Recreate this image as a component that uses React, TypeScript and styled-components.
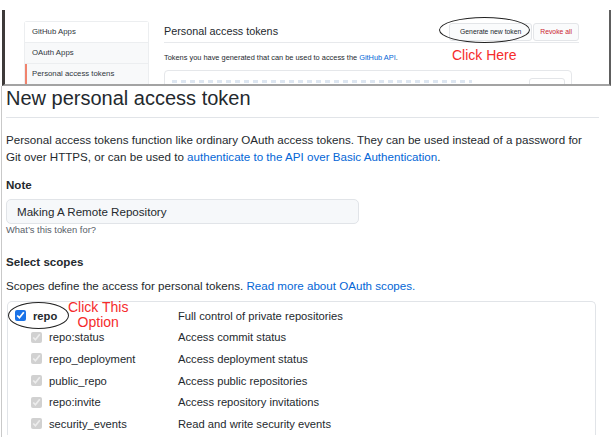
import React from "react"
import styled, { createGlobalStyle } from "styled-components"

const GlobalStyle = createGlobalStyle`
  html, body {
    margin: 0;
    padding: 0;
    background: #fff;
  }
  body {
    font-family: "Liberation Sans", Arial, sans-serif;
    color: #24292e;
  }
`

const Page = styled.div`
  width: 614px;
  height: 445px;
  overflow: hidden;
  background: #fff;
`

// ---------- cropped screenshot at the top ----------

const TopShot = styled.div`
  box-sizing: border-box;
  margin: 10px 3px 0 2px;
  height: 76px;
  border-left: 3px solid #3d3a39;
  border-right: 2px solid #5e5e5e;
  border-bottom: 2px solid #a3a3a3;
  display: flex;
  gap: 15px;
  padding: 11px 0 0 19px;
  overflow: hidden;
  position: relative;
`

const SideMenu = styled.div`
  width: 123px;
  flex-shrink: 0;
  border: 1px solid #eceef0;
  border-bottom: none;
  border-radius: 3px 3px 0 0;
  font-size: 7.8px;
  color: #2f363d;
`

const SideItem = styled.div<{ $active?: boolean; $tint?: boolean }>`
  height: 20px;
  line-height: 20px;
  padding-left: 7px;
  border-top: 1px solid #eceef0;
  background: ${(p) => (p.$tint ? "#f8f9fa" : "#fff")};
  box-shadow: ${(p) => (p.$active ? "inset 2px 0 0 #f0836d" : "none")};
  &:first-child {
    border-top: none;
  }
`

const TopMain = styled.div`
  width: 415px;
  flex-shrink: 0;
`

const TopHead = styled.div`
  display: flex;
  align-items: center;
  justify-content: space-between;
  height: 20px;
  padding-bottom: 1px;
  border-bottom: 1px solid #e7e9ec;
`

const TopTitle = styled.div`
  font-size: 10.8px;
  color: #24292e;
`

const TopButtons = styled.div`
  display: flex;
  gap: 1px;
  margin-top: 1px;
`

const SmallBtn = styled.div<{ $danger?: boolean }>`
  height: 16px;
  line-height: 16px;
  padding: 0 ${(p) => (p.$danger ? "6px" : "10px")};
  border: 1px solid #e3e5e8;
  border-radius: 3px;
  background: #fafbfc;
  font-size: 6.8px;
  font-weight: 500;
  color: ${(p) => (p.$danger ? "#cb2431" : "#24292e")};
`

const TopText = styled.div`
  font-size: 7.4px;
  color: #24292e;
  margin-top: 10px;
  a {
    color: #0366d6;
    text-decoration: none;
  }
`

const TokenBox = styled.div`
  margin-top: 8px;
  width: 406px;
  height: 24px;
  border: 1px solid #e5e7ea;
  border-radius: 4px;
  position: relative;
`

const BlurLine = styled.div`
  position: absolute;
  left: 7px;
  top: 9px;
  width: 300px;
  height: 3px;
  background: repeating-linear-gradient(90deg, #b4c8e2 0 5px, transparent 5px 9px);
  filter: blur(0.6px);
  opacity: 0.45;
`

const BlurButton = styled.div`
  position: absolute;
  right: 6px;
  top: 7px;
  width: 34px;
  height: 16px;
  border: 1px solid #e3e5e8;
  border-radius: 3px;
`

// ---------- annotations drawn over the shots ----------

const Ring = styled.div<{ $l: number; $t: number; $w: number; $h: number }>`
  position: absolute;
  left: ${(p) => p.$l}px;
  top: ${(p) => p.$t}px;
  width: ${(p) => p.$w}px;
  height: ${(p) => p.$h}px;
  box-sizing: border-box;
  border: 1.3px solid #222;
  border-radius: 50%;
  pointer-events: none;
`

const Note = styled.div<{ $l: number; $t: number }>`
  position: absolute;
  left: ${(p) => p.$l}px;
  top: ${(p) => p.$t}px;
  color: #f52b2b;
  font-family: "Liberation Sans", Arial, sans-serif;
  font-size: 14px;
  line-height: 15px;
  text-align: center;
  white-space: nowrap;
`

// ---------- main form screenshot ----------

const FormShot = styled.div`
  box-sizing: border-box;
  height: 351px;
  margin-left: 1px;
  border-left: 1px solid #c9c9c9;
  padding: 0 15px 0 4px;
  overflow: hidden;
  position: relative;
`

const PageTitle = styled.h1`
  margin: 0;
  font-size: 20px;
  font-weight: 400;
  line-height: 25px;
  padding-top: 0;
  padding-bottom: 6px;
  border-bottom: 1px solid #e1e4e8;
  color: #24292e;
`

const Para = styled.p<{ $top?: number }>`
  margin: ${(p) => p.$top ?? 13}px 0 0;
  font-size: 11.6px;
  line-height: 17px;
  color: #24292e;
  a {
    color: #0366d6;
    text-decoration: none;
  }
`

const Label = styled.div<{ $top: number }>`
  margin-top: ${(p) => p.$top}px;
  font-size: 11.6px;
  font-weight: 700;
  line-height: 16px;
`

const NoteInput = styled.div`
  margin-top: 6px;
  box-sizing: border-box;
  width: 353px;
  height: 25px;
  line-height: 23px;
  padding-left: 10px;
  background: #f6f8fa;
  border: 1px solid #e1e4e8;
  border-radius: 5px;
  font-size: 11.6px;
  color: #24292e;
`

const Hint = styled.div`
  margin-top: 0;
  font-size: 9.4px;
  line-height: 12px;
  color: #586069;
`

const ScopeBox = styled.div`
  margin-top: 7px;
  margin-left: 1px;
  width: 589px;
  border: 1px solid #e1e4e8;
  border-bottom: none;
  border-radius: 5px 5px 0 0;
  padding: 3px 0 0 7px;
  box-sizing: border-box;
`

const ScopeRow = styled.div`
  display: grid;
  grid-template-columns: 163px 1fr;
  align-items: center;
  height: 21.6px;
  font-size: 11.2px;
  color: #24292e;
`

const ScopeName = styled.label<{ $child?: boolean; $bold?: boolean }>`
  display: flex;
  align-items: center;
  gap: 7px;
  padding-left: ${(p) => (p.$child ? "16px" : "0")};
  font-weight: ${(p) => (p.$bold ? 700 : 400)};
`

const Check = styled.input`
  margin: 0;
  width: 11px;
  height: 11px;
  accent-color: #1a73e8;
`

const ScopeDesc = styled.span`
  color: #24292e;
`

const scopes = [
  { name: "repo:status", desc: "Access commit status" },
  { name: "repo_deployment", desc: "Access deployment status" },
  { name: "public_repo", desc: "Access public repositories" },
  { name: "repo:invite", desc: "Access repository invitations" },
  { name: "security_events", desc: "Read and write security events" },
]

export default function App() {
  return (
    <Page>
      <GlobalStyle />
      <TopShot>
        <SideMenu>
          <SideItem>GitHub Apps</SideItem>
          <SideItem $tint>OAuth Apps</SideItem>
          <SideItem $tint $active>Personal access tokens</SideItem>
        </SideMenu>
        <TopMain>
          <TopHead>
            <TopTitle>Personal access tokens</TopTitle>
            <TopButtons>
              <SmallBtn>Generate new token</SmallBtn>
              <SmallBtn $danger>Revoke all</SmallBtn>
            </TopButtons>
          </TopHead>
          <TopText>
            Tokens you have generated that can be used to access the <a href="#">GitHub API</a>.
          </TopText>
          <TokenBox>
            <BlurLine />
            <BlurButton />
          </TokenBox>
        </TopMain>
        <Ring $l={434} $t={7} $w={91} $h={26} />
        <Note $l={447} $t={38}>Click Here</Note>
      </TopShot>

      <FormShot>
        <PageTitle>New personal access token</PageTitle>
        <Para>
          Personal access tokens function like ordinary OAuth access tokens. They can be used instead of a password for
          <br />
          Git over HTTPS, or can be used to <a href="#">authenticate to the API over Basic Authentication</a>.
        </Para>

        <Label $top={12}>Note</Label>
        <NoteInput>Making A Remote Repository</NoteInput>
        <Hint>What&rsquo;s this token for?</Hint>

        <Label $top={18}>Select scopes</Label>
        <Para $top={7}>
          Scopes define the access for personal tokens. <a href="#">Read more about OAuth scopes.</a>
        </Para>

        <ScopeBox>
          <ScopeRow>
            <ScopeName $bold>
              <Check type="checkbox" defaultChecked />
              repo
            </ScopeName>
            <ScopeDesc>Full control of private repositories</ScopeDesc>
          </ScopeRow>
          {scopes.map((s) => (
            <ScopeRow key={s.name}>
              <ScopeName $child>
                <Check type="checkbox" defaultChecked disabled />
                {s.name}
              </ScopeName>
              <ScopeDesc>{s.desc}</ScopeDesc>
            </ScopeRow>
          ))}
        </ScopeBox>

        <Ring $l={6} $t={216} $w={61} $h={27} />
        <Note $l={66} $t={214}>
          Click This
          <br />
          Option
        </Note>
      </FormShot>
    </Page>
  )
}
